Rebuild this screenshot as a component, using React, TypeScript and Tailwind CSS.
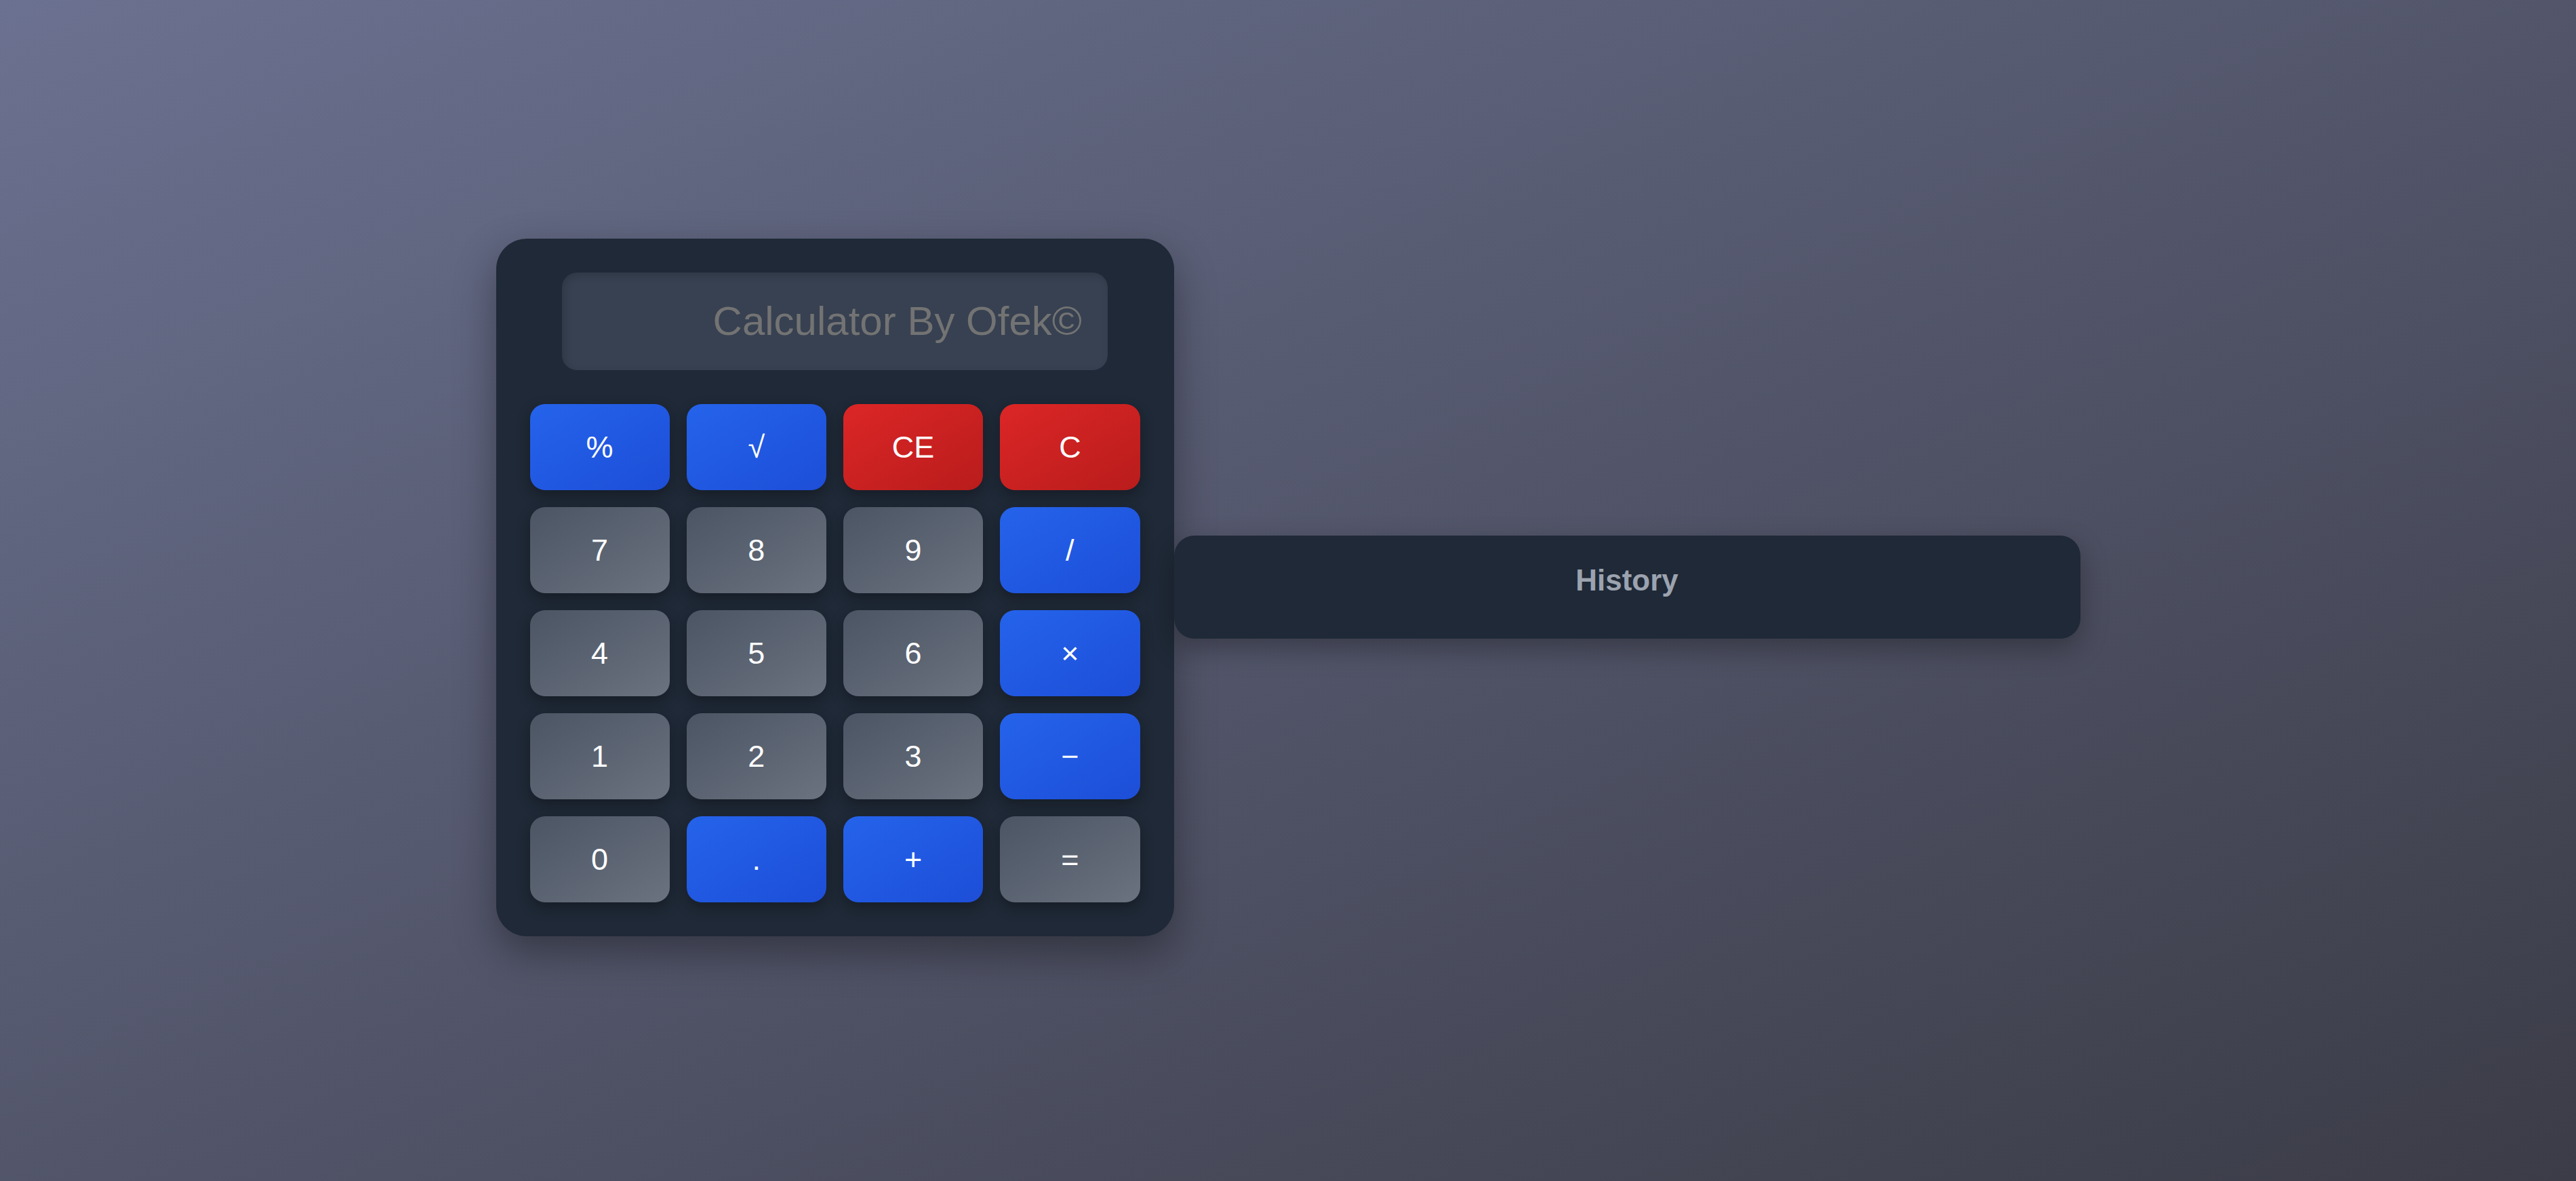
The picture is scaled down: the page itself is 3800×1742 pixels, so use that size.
import React from 'react';

type Kind = 'blue' | 'red' | 'gray';

const KEYS: { label: string; kind: Kind }[] = [
  { label: '%', kind: 'blue' },
  { label: '√', kind: 'blue' },
  { label: 'CE', kind: 'red' },
  { label: 'C', kind: 'red' },
  { label: '7', kind: 'gray' },
  { label: '8', kind: 'gray' },
  { label: '9', kind: 'gray' },
  { label: '/', kind: 'blue' },
  { label: '4', kind: 'gray' },
  { label: '5', kind: 'gray' },
  { label: '6', kind: 'gray' },
  { label: '×', kind: 'blue' },
  { label: '1', kind: 'gray' },
  { label: '2', kind: 'gray' },
  { label: '3', kind: 'gray' },
  { label: '−', kind: 'blue' },
  { label: '0', kind: 'gray' },
  { label: '.', kind: 'blue' },
  { label: '+', kind: 'blue' },
  { label: '=', kind: 'gray' },
];

const kindClass: Record<Kind, string> = {
  blue: 'bg-gradient-to-br from-[#2563eb] to-[#1d4ed8]',
  red: 'bg-gradient-to-br from-[#dc2626] to-[#b91c1c]',
  gray: 'bg-gradient-to-br from-[#4b5563] to-[#6b7280]',
};

const App: React.FC = () => {
  return (
    <div className="h-screen w-full flex items-center justify-center pb-[10px] bg-gradient-to-br from-[#6b7190] to-[#3b3c47] font-['Liberation_Sans',Arial,sans-serif]">
      <div className="w-[1000px] p-[50px] bg-[#1f2937] rounded-[45px] shadow-[0_25px_60px_rgba(0,0,0,0.35)]">
        <div className="w-[805px] h-[144px] mx-auto rounded-[22px] bg-[#374151] shadow-[inset_4px_4px_12px_rgba(0,0,0,0.15)] flex items-center justify-end pr-[38px]">
          <span className="text-[60px] leading-none text-[#737373]">Calculator By Ofek©</span>
        </div>
        <div className="mt-[50px] grid grid-cols-4 gap-[25px]">
          {KEYS.map((k) => (
            <button
              key={k.label}
              className={`${kindClass[k.kind]} h-[127px] rounded-[22px] text-white text-[45px] leading-none flex items-center justify-center shadow-[0_8px_20px_rgba(0,0,0,0.3)]`}
            >
              {k.label}
            </button>
          ))}
        </div>
      </div>
      <div className="w-[1337px] h-[152px] bg-[#1f2937] rounded-[30px] shadow-[0_15px_40px_rgba(0,0,0,0.3)] flex justify-center pt-[44px]">
        <span className="text-[44px] font-bold leading-none text-[#9ca3af]">History</span>
      </div>
    </div>
  );
};

export default App;
